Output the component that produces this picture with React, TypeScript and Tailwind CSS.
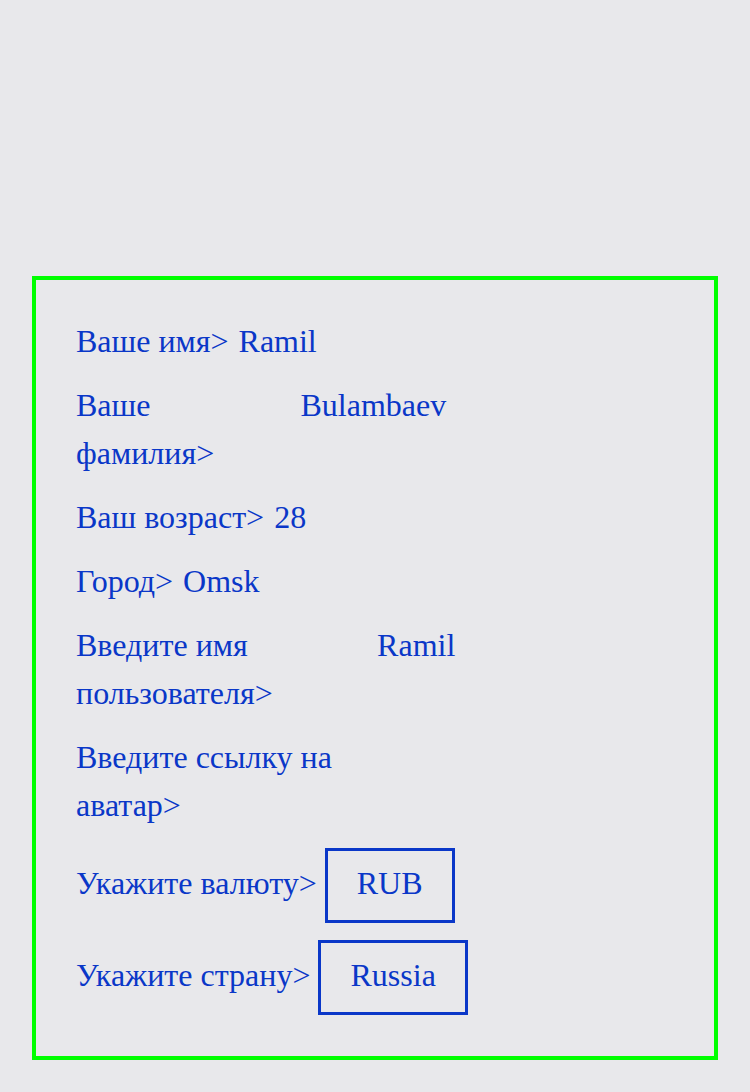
export default function App() {
  const fields = [
    { label: "Ваше имя>", value: "Ramil" },
    { label: "Ваше фамилия>", value: "Bulambaev" },
    { label: "Ваш возраст>", value: "28" },
    { label: "Город>", value: "Omsk" },
    { label: "Введите имя пользователя>", value: "Ramil" },
    { label: "Введите ссылку на аватар>", value: "" },
  ]

  const choices = [
    { label: "Укажите валюту>", value: "RUB" },
    { label: "Укажите страну>", value: "Russia" },
  ]

  return (
    <div className="min-h-[1092px] bg-[#e8e8eb] pt-[276px] font-['Liberation_Serif',serif] text-[32px] leading-[48px] text-[#0a37c8]">
      <div className="mx-8 flex flex-col gap-4 border-4 border-[#00ff00] px-10 pt-[37px] pb-[41px]">
        {fields.map((f) => (
          <div key={f.label} className="flex gap-[10px]">
            <span>{f.label}</span>
            <span className="w-[384px] min-w-0">{f.value}</span>
          </div>
        ))}
        {choices.map((c, i) => (
          <div key={c.label} className={`flex items-baseline gap-2 ${i === 0 ? "mt-[3px]" : "mt-[1px]"}`}>
            <span className="shrink-0">{c.label}</span>
            <span className="shrink-0 border-[3px] border-[#0a37c8] px-[29px] pt-2 pb-[13px]">
              {c.value}
            </span>
          </div>
        ))}
      </div>
    </div>
  )
}
